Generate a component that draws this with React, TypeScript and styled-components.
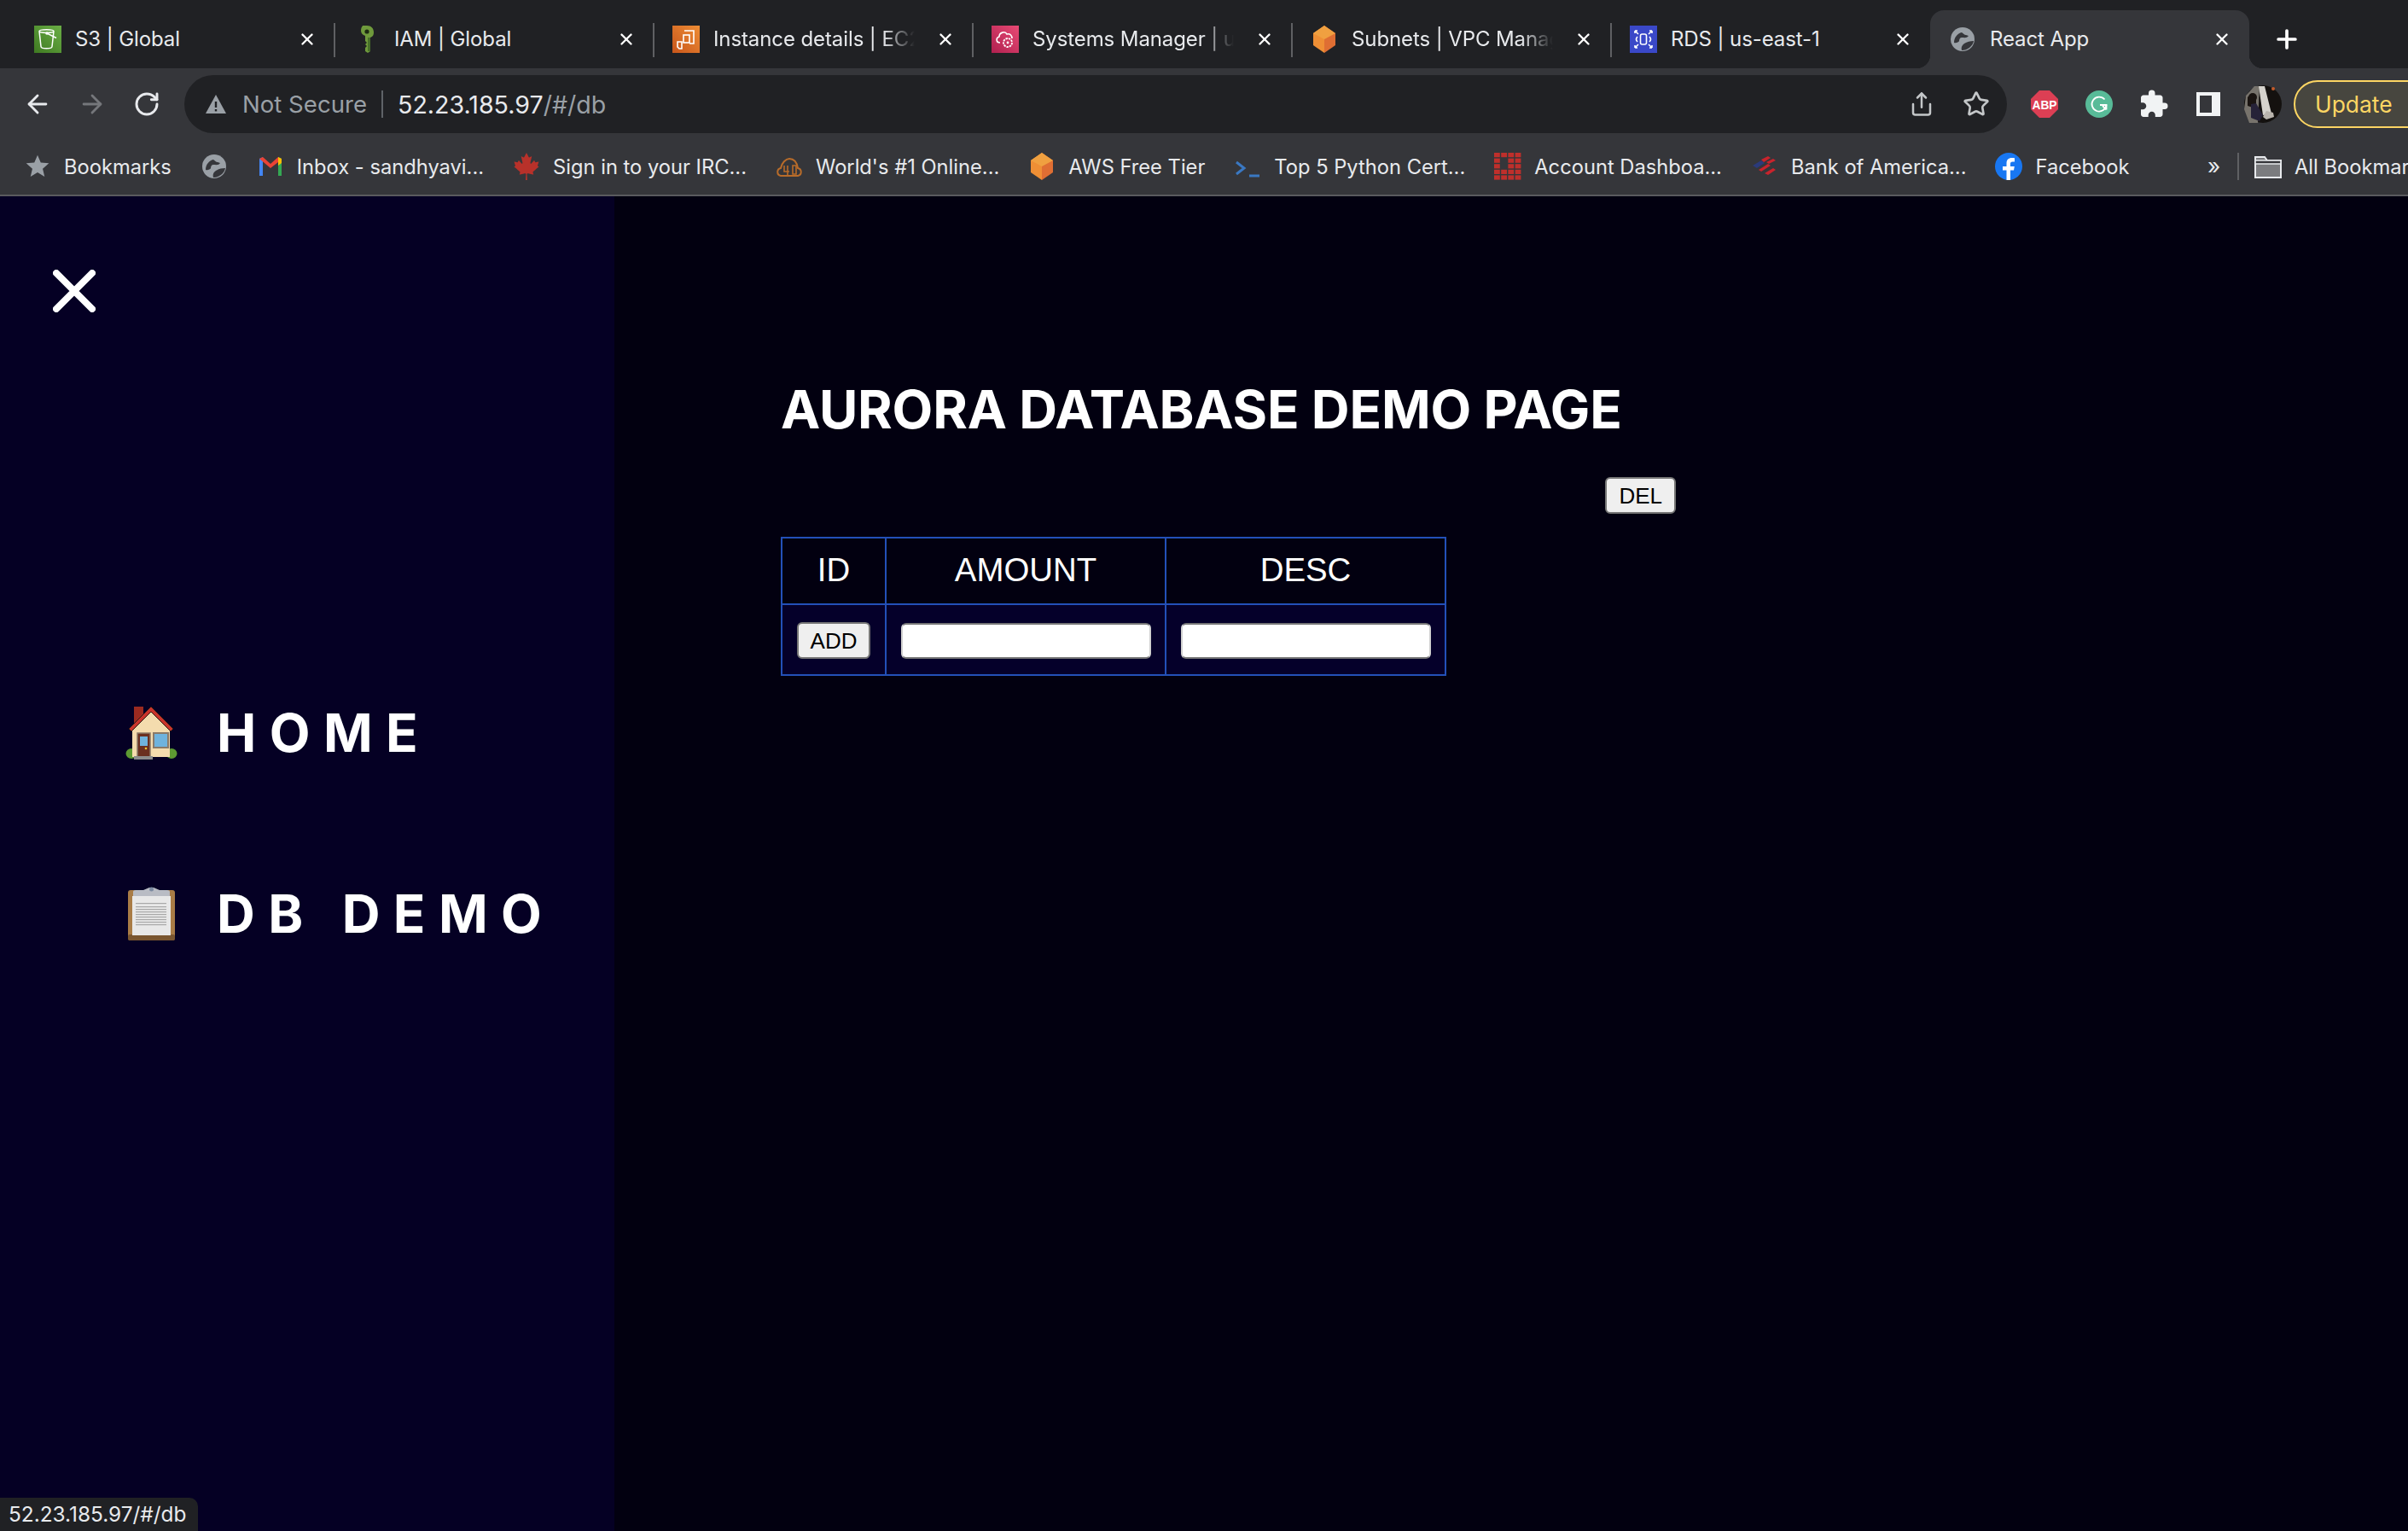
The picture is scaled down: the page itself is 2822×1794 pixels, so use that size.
import React from 'react';
import styled, { createGlobalStyle } from 'styled-components';
import { ArrowLeft, ArrowRight, RotateCw, Share, Star, Plus, X } from 'lucide-react';
import { MdExtension, MdStar } from 'react-icons/md';
import { FaCanadianMapleLeaf } from 'react-icons/fa';

const Global = createGlobalStyle`
  html, body { margin: 0; padding: 0; background: #020010; }
  * { box-sizing: border-box; }
  body { font-family: Inter, "Liberation Sans", sans-serif; }
`;

const Page = styled.div`
  width: 2822px; height: 1794px; display: flex; flex-direction: column; overflow: hidden; position: relative;
`;
const TabStrip = styled.div`
  height: 80px; flex: none; background: #202124; display: flex; align-items: flex-end; padding-left: 18px;
`;
const Tab = styled.div<{ $active?: boolean; $sep?: boolean }>`
  position: relative; width: 374px; height: 68px; display: flex; align-items: center; padding: 0 20px 0 22px;
  background: ${p => (p.$active ? '#35363a' : 'transparent')};
  border-radius: ${p => (p.$active ? '16px 16px 0 0' : '0')};
  &::before {
    content: ${p => (p.$sep ? '""' : 'none')};
    position: absolute; left: -1px; top: 15px; width: 2px; height: 40px; background: #5f6063;
  }
  ${p => p.$active && `
    &::after {
      content: ""; position: absolute; right: -16px; bottom: 0; width: 16px; height: 16px;
      background: radial-gradient(circle at 100% 0, transparent 16px, #35363a 16.5px);
    }
  `}
`;
const ActiveFlareLeft = styled.span`
  position: absolute; left: -16px; bottom: 0; width: 16px; height: 16px;
  background: radial-gradient(circle at 0 0, transparent 16px, #35363a 16.5px);
`;
const Favicon = styled.span`
  width: 32px; height: 32px; flex: none; display: block;
  svg { display: block; width: 32px; height: 32px; }
`;
const TabTitle = styled.span<{ $fade?: boolean }>`
  flex: 1; margin: 0 24px 0 16px; min-width: 0; overflow: hidden; white-space: nowrap;
  font-size: 24px; letter-spacing: -0.1px; line-height: 34px; color: #e8eaed;
  ${p => p.$fade && `mask-image: linear-gradient(to right, #000 84%, transparent 100%);`}
`;
const TabClose = styled.span`
  width: 24px; height: 24px; flex: none; display: flex; align-items: center; justify-content: center; color: #fff;
`;
const NewTab = styled.span`
  width: 36px; height: 68px; margin-left: 26px; display: flex; align-items: center; justify-content: center; color: #fff;
`;
const Toolbar = styled.div`
  height: 76px; flex: none; background: #35363a; padding: 8px 0 0 12px; display: flex; align-items: center; overflow: hidden;
`;
const NavBtn = styled.span<{ $dim?: boolean }>`
  width: 64px; height: 56px; flex: none; display: flex; align-items: center; justify-content: center;
  color: ${p => (p.$dim ? '#75777b' : '#e8eaed')};
`;
const Address = styled.div`
  flex: 1; height: 68px; margin-left: 12px; border-radius: 34px; background: #202124; display: flex; align-items: center;
  padding: 0 4px 0 24px;
`;
const Warn = styled.span`
  width: 26px; height: 24px; flex: none; display: block; svg { display: block; }
`;
const NotSecure = styled.span`
  width: 165px; margin-left: 18px; color: #9aa0a6; white-space: nowrap; border-right: 2px solid #5f6368; line-height: 32px; font-size: 27.6px;
`;
const Url = styled.span`
  margin-left: 17px; color: #e8eaed; white-space: nowrap; flex: 1; font-size: 28.6px;
`;
const UrlRest = styled.span`
  color: #9aa0a6;
`;
const Extensions = styled.div`
  width: 470px; flex: none; padding-left: 12px; display: flex; align-items: center;
`;
const Update = styled.span`
  flex: none; height: 56px; width: 160px; margin-left: 4px; border: 2px solid #fdd663; border-radius: 28px;
  background: #47463f; color: #fdd663; font-size: 26.4px; line-height: 52px; padding-left: 23px;
`;
const Bookmarks = styled.div`
  height: 74px; flex: none; background: #35363a; border-bottom: 2px solid #5a5b5e; display: flex; align-items: center; padding: 6px 0 0 28px; overflow: hidden; gap: 34px;
`;
const Bookmark = styled.span`
  display: flex; align-items: center; gap: 15px; flex: none; font-size: 23.7px; color: #e8eaed; white-space: nowrap;
`;
const BmIcon = styled.span`
  width: 32px; height: 32px; flex: none; display: block; svg { display: block; width: 32px; height: 32px; }
`;
const BmRight = styled.div`
  margin-left: auto; width: 242px; flex: none; display: flex; align-items: center; gap: 18px;
`;
const Chevrons = styled.span`
  width: 24px; padding-left: 7px; color: #e8eaed; font-size: 26px; flex: none; line-height: 32px;
`;
const BmDivider = styled.span`
  width: 2px; height: 32px; background: #5f6063; flex: none;
`;
const Body = styled.div`
  flex: 1; display: flex; min-height: 0;
`;
const Sidebar = styled.aside`
  width: 720px; flex: none; background: #050024; padding: 86px 0 0 62px; display: flex; flex-direction: column; color: #fff;
`;
const CloseBtn = styled.span`
  width: 50px; height: 50px; display: block; svg { display: block; }
`;
const Nav = styled.nav`
  margin: 442px 0 0 85px; display: flex; flex-direction: column; gap: 112px;
`;
const NavItem = styled.div`
  height: 100px; display: flex; align-items: center; gap: 46px;
`;
const Emoji = styled.span`
  width: 61px; height: 64px; flex: none; display: block; svg { display: block; width: 61px; height: 64px; }
`;
const NavText = styled.span`
  font-size: 62px; font-weight: 700; letter-spacing: 15.4px; white-space: nowrap; color: #fff;
`;
const Main = styled.main`
  flex: 1; background: #020010; padding: 210px 0 0 196px; color: #fff;
`;
const Title = styled.h1`
  margin: 0 0 0 -1px; font-size: 62px; line-height: 80px; font-weight: 700; color: #fff; letter-spacing: -0.2px; white-space: nowrap;
`;
const DelRow = styled.div`
  width: 1048px; margin: 39px 0 27px; display: flex; justify-content: flex-end;
`;
const NativeBtn = styled.button`
  height: 43px; padding: 0 14px; border: 2px solid #767676; border-radius: 6px; background: #efefef; color: #000;
  font-family: "Liberation Sans", Arial, sans-serif; font-size: 26px; line-height: 1; display: block;
`;
const Table = styled.table`
  border-collapse: collapse; table-layout: fixed; width: 778px; font-family: "Liberation Sans", Arial, sans-serif; margin-left: -1px;
`;
const Head = styled.th<{ $w: number }>`
  width: ${p => p.$w}px; height: 78px; padding: 0 0 2px; border: 2px solid #2350b8; font-size: 38.4px; font-weight: 400; color: #fff; text-align: center;
`;
const Cell = styled.td`
  height: 83px; padding: 2px 0 0; border: 2px solid #2350b8; background: #05002a; text-align: center; vertical-align: middle;
`;
const CellInner = styled.div`
  display: flex; justify-content: center;
`;
const Field = styled.input`
  width: 293px; height: 42px; border: 2px solid #767676; border-left-color: #d0d0d0; border-right-color: #d0d0d0; border-radius: 6px; background: #fff; padding: 0; display: block;
`;
const Status = styled.div`
  position: absolute; left: 0; bottom: 0; width: 232px; height: 39px; background: #202124; border-top-right-radius: 10px;
  color: #e8eaed; font-size: 24.4px; line-height: 39px; padding-left: 10px; white-space: nowrap;
`;

const S3Icon = () => (
  <svg viewBox="0 0 32 32"><defs><linearGradient id="s3" x1="0" y1="1" x2="1" y2="0"><stop offset="0" stopColor="#3f7a22" /><stop offset="1" stopColor="#6aae45" /></linearGradient></defs>
    <rect width="32" height="32" fill="url(#s3)" /><path d="M6 6.500c0 2.500 17 2.500 17 0s-17-2.500-17 0l2 18c0 3 13 3 13 0l2-18" fill="none" stroke="#fff" strokeWidth="1.500" /><path d="M15 9l11 5.500" stroke="#fff" strokeWidth="1.500" /><circle cx="15" cy="9" r="1.800" fill="#fff" /></svg>
);
const KeyIcon = () => (
  <svg viewBox="0 0 32 32"><path d="M16 0c5 0 8 3 8 8 0 3-1 5-4 6v16l-3 2-3-2v-4l2-2-2-2 2-2-2-2v-6c-3-1-5-3-5-6 0-5 3-8 7-8z" fill="#6f9a3c" /><circle cx="16" cy="7" r="2.600" fill="#1d2b12" /><path d="M17 14h3v16h-3z" fill="#48702a" /></svg>
);
const Ec2Icon = () => (
  <svg viewBox="0 0 32 32"><defs><linearGradient id="ec" x1="0" y1="1" x2="1" y2="0"><stop offset="0" stopColor="#c8561b" /><stop offset="1" stopColor="#ee8d35" /></linearGradient></defs>
    <rect width="32" height="32" fill="url(#ec)" /><path d="M14 6h11v15h-5M6 19h5v8H8l-2-2z" fill="none" stroke="#fff" strokeWidth="1.600" /><rect x="13" y="11" width="7" height="9" fill="none" stroke="#fff" strokeWidth="1.600" /></svg>
);
const SsmIcon = () => (
  <svg viewBox="0 0 32 32"><defs><linearGradient id="ss" x1="0" y1="1" x2="1" y2="0"><stop offset="0" stopColor="#b0204f" /><stop offset="1" stopColor="#e84a75" /></linearGradient></defs>
    <rect width="32" height="32" fill="url(#ss)" /><path d="M10 20c-5 0-5-6-1-7 0-5 7-7 9-3 4-1 6 2 6 5" fill="none" stroke="#fff" strokeWidth="1.600" /><circle cx="19" cy="20" r="5" fill="none" stroke="#fff" strokeWidth="1.800" strokeDasharray="2.400 1" /><circle cx="19" cy="20" r="1.400" fill="#fff" /></svg>
);
const CubeIcon = () => (
  <svg viewBox="0 0 32 32"><path d="M16 0l13 9v14L16 32z" fill="#df6e33" /><path d="M16 0L3 9v14l13 9z" fill="#ef8f35" /><path d="M16 0l13 9-13 7L3 9z" fill="#f0a040" /></svg>
);
const RdsIcon = () => (
  <svg viewBox="0 0 32 32"><rect width="32" height="32" fill="#3a48c8" /><g fill="none" stroke="#fff" strokeWidth="1.600"><rect x="12.500" y="10" width="7" height="12" rx="2" /><path d="M6 6l4 4M6 6v3M6 6h3M26 6l-4 4M26 6v3M26 6h-3M6 26l4-4M6 26v-3M6 26h3M26 26l-4-4M26 26v-3M26 26h-3M9 13c-2 2-2 4 0 6M23 13c2 2 2 4 0 6" /></g></svg>
);
const GlobeIcon = ({ dark = '#35363a' }: { dark?: string }) => (
  <svg viewBox="0 0 32 32"><circle cx="16" cy="16" r="14" fill="#9aa0a6" /><path d="M6 20c0-6 4-11 9-12 2 1 3 3 5 3l3 1c-2 3-5 2-8 2-2 0-3 2-3 4 0 1-4 3-6 2zM15 29c-1-3 0-6 3-8 3-2 7-3 11-3-1 6-7 11-14 11z" fill={dark} /></svg>
);
const GmailIcon = () => (
  <svg viewBox="0 0 32 32"><path d="M3 27V7l4-2v22z" fill="#4285f4" /><path d="M25 27V5l4 2v20z" fill="#34a853" /><path d="M3 7l4-2 9 8 9-8v6l-9 7z" fill="#ea4335" /><path d="M25 5l4 2v5l-4 3z" fill="#fbbc04" /></svg>
);
const CloudIcon = () => (
  <svg viewBox="0 0 32 32"><g fill="none" stroke="#b86c2a" strokeWidth="2"><path d="M6 27c-5-1-5-8 0-9 1-6 6-11 10-11 6 0 9 5 10 11 5 1 5 8 0 9z" /><path d="M10 15v7h6M14 15v11M20 15h4v10h-4z" strokeWidth="1.600" /></g></svg>
);
const PyIcon = () => (
  <svg viewBox="0 0 32 32"><path d="M3 11l9 7-9 7" fill="none" stroke="#3a78c2" strokeWidth="3" /><path d="M18 27h12" stroke="#3a78c2" strokeWidth="3" /></svg>
);
const GridIcon = () => (
  <svg viewBox="0 0 32 32" fill="#bf2f2b">{[0, 1, 2, 3, 4].flatMap(r => [0, 1, 2, 3].map(c => (r === 1 && c === 1) || (r===2&&c===1) ? null : <rect key={`${r}-${c}`} x={c * 8.2} y={r * 6.600} width="6.800" height="5.200" />))}</svg>
);
const BoaIcon = () => (
  <svg viewBox="0 0 32 32"><path d="M2 15l10-6 4 3-9 6z" fill="#2b3a7a" /><path d="M12 8l8-4 3 2-8 5zM9 20l11-7 3 2-11 7zM16 24l10-6 3 2-9 6z" fill="#c8232c" /><path d="M18 11l8-4 3 2-8 4z" fill="#c8232c" /></svg>
);
const FbIcon = () => (
  <svg viewBox="0 0 32 32"><circle cx="16" cy="16" r="16" fill="#1877f2" /><path d="M22 20.500l.8-4.600H18v-3c0-1.300.6-2.500 2.700-2.500H23V6.300c-3-.6-9.500-1.200-9.500 6V16H9v4.500h4.500V32h4.500V20.500z" fill="#fff" /></svg>
);
const FolderIcon = () => (
  <svg viewBox="0 0 32 32"><path d="M1 5h11l3 4h16v20H1z" fill="#7b7c7f" stroke="#e8eaed" strokeWidth="2" /><path d="M1 9h30v4H1z" fill="#35363a" stroke="#e8eaed" strokeWidth="1.600" /></svg>
);
const AbpIcon = () => (
  <svg viewBox="0 0 32 32" width="32" height="32"><path d="M10 0h12l10 10v12L22 32H10L0 22V10z" fill="#dc3f54" /><text x="16" y="21.500" fontFamily="Liberation Sans" fontWeight="700" fontSize="14.500" fill="#fff" textAnchor="middle" textLength="29" lengthAdjust="spacingAndGlyphs">ABP</text></svg>
);
const GrammarlyIcon = () => (
  <svg viewBox="0 0 32 32" width="32" height="32"><circle cx="16" cy="16" r="16" fill="#58bb98" /><path d="M22.500 10.500a8.500 8.500 0 1 0 2 6.500H17" fill="none" stroke="#fff" strokeWidth="1.800" /><path d="M24.500 17v5.500M24.500 22.500L20 18" stroke="#fff" strokeWidth="1.800" fill="none" /></svg>
);
const SidePanelIcon = () => (
  <svg viewBox="0 0 28 28" width="28" height="28"><rect width="28" height="28" fill="#f1f3f4" /><rect x="4" y="4" width="14" height="20" fill="#35363a" /></svg>
);
const AvatarIcon = () => (
  <svg viewBox="0 0 44 44" width="44" height="44"><circle cx="22" cy="22" r="22" fill="#14110f" /><path d="M2 12L12 1h6l-2 43H6L0 28z" fill="#77736c" /><path d="M17 1h7l8 32-10 2z" fill="#d5d2cc" /><circle cx="10" cy="14" r="5" fill="#1a1411" /><path d="M4 14c3-4 8-3 10 0v8l-4 4-6-2z" fill="#1a1411" /><path d="M8 22l6-1 8 14-4 7-10-4z" fill="#262238" /><path d="M26 30l8 2 1 5-9 3-4-3z" fill="#b9b4ad" /><circle cx="34" cy="4" r="2" fill="#c25a2a" /></svg>
);
const HouseEmoji = () => (
  <svg viewBox="0 0 61 64"><ellipse cx="7" cy="57" rx="6.500" ry="6" fill="#5d9a32" /><ellipse cx="54" cy="57" rx="6.500" ry="6" fill="#5d9a32" /><rect x="10" y="2" width="11" height="22" fill="#9b2a20" /><path d="M8 28L30 6l22 22v33H8z" fill="#f4dcae" /><path d="M4 28L30 2l26 26-3 3L30 8 7 31z" fill="#c9342b" stroke="#2b1a14" strokeWidth="1" /><rect x="14" y="33" width="15" height="30" fill="#6b3020" stroke="#8a7a68" strokeWidth="1.500" /><rect x="17" y="37" width="9" height="11" fill="#6fb3dd" /><circle cx="24" cy="51" r="1.300" fill="#f4c430" /><rect x="33" y="33" width="17" height="17" fill="#6fb3dd" stroke="#8a7a68" strokeWidth="2" /><rect x="10" y="60" width="22" height="4" fill="#8d8d8d" /></svg>
);
const ClipboardEmoji = () => (
  <svg viewBox="0 0 61 64"><rect x="3" y="5" width="55" height="59" rx="3" fill="#a97c46" /><rect x="3" y="57" width="55" height="7" rx="2" fill="#7a5630" /><rect x="8" y="12" width="45" height="46" fill="#e8e8e8" /><g fill="#a8a8a8">{[20, 24, 27, 30, 33, 36, 39, 42, 45].map(y => <rect key={y} x="12" y={y} width="36" height="1.200" />)}</g><path d="M9 12V7q0-2 3-2h9l7-3h5l7 3h9q3 0 3 2v5z" fill="#b9bcc4" /><circle cx="30.500" cy="4" r="2.500" fill="#7b8aa0" /></svg>
);
const WarnIcon = () => (
  <svg viewBox="0 0 26 24" width="26" height="24"><path d="M13 1l12 22H1z" fill="#9aa0a6" /><rect x="11.800" y="9" width="2.400" height="7" fill="#202124" /><rect x="11.800" y="18" width="2.400" height="2.400" fill="#202124" /></svg>
);

const tabs = [
  { title: 'S3 | Global', icon: <S3Icon /> },
  { title: 'IAM | Global', icon: <KeyIcon />, sep: true },
  { title: 'Instance details | EC2 Management', icon: <Ec2Icon />, sep: true, fade: true },
  { title: 'Systems Manager | us-east-1', icon: <SsmIcon />, sep: true, fade: true },
  { title: 'Subnets | VPC Management', icon: <CubeIcon />, sep: true, fade: true },
  { title: 'RDS | us-east-1', icon: <RdsIcon />, sep: true },
  { title: 'React App', icon: <GlobeIcon />, active: true },
];

const bookmarks = [
  { label: 'Bookmarks', icon: <MdStar size={32} color="#9aa0a6" /> },
  { label: '', icon: <GlobeIcon /> },
  { label: 'Inbox - sandhyavi...', icon: <GmailIcon /> },
  { label: 'Sign in to your IRC...', icon: <FaCanadianMapleLeaf size={32} color="#b8312a" /> },
  { label: "World's #1 Online...", icon: <CloudIcon /> },
  { label: 'AWS Free Tier', icon: <CubeIcon /> },
  { label: 'Top 5 Python Cert...', icon: <PyIcon /> },
  { label: 'Account Dashboa...', icon: <GridIcon /> },
  { label: 'Bank of America...', icon: <BoaIcon /> },
  { label: 'Facebook', icon: <FbIcon /> },
];

export default function App() {
  return (
    <Page>
      <Global />
      <TabStrip>
        {tabs.map(t => (
          <Tab key={t.title} $active={t.active} $sep={t.sep}>
            {t.active && <ActiveFlareLeft />}
            <Favicon>{t.icon}</Favicon>
            <TabTitle $fade={t.fade}>{t.title}</TabTitle>
            <TabClose><X size={22} strokeWidth={2.6} /></TabClose>
          </Tab>
        ))}
        <NewTab><Plus size={34} strokeWidth={2.6} /></NewTab>
      </TabStrip>
      <Toolbar>
        <NavBtn><ArrowLeft size={34} strokeWidth={2} /></NavBtn>
        <NavBtn $dim><ArrowRight size={34} strokeWidth={2} /></NavBtn>
        <NavBtn><RotateCw size={32} strokeWidth={2.2} /></NavBtn>
        <Address>
          <Warn><WarnIcon /></Warn>
          <NotSecure>Not Secure</NotSecure>
          <Url>52.23.185.97<UrlRest>/#/db</UrlRest></Url>
          <NavBtn><Share size={30} strokeWidth={2} color="#c4c7c9" /></NavBtn>
          <NavBtn><Star size={32} strokeWidth={2} color="#c4c7c9" /></NavBtn>
        </Address>
        <Extensions>
          <NavBtn><AbpIcon /></NavBtn>
          <NavBtn><GrammarlyIcon /></NavBtn>
          <NavBtn><MdExtension size={36} color="#f1f3f4" /></NavBtn>
          <NavBtn><SidePanelIcon /></NavBtn>
          <NavBtn><AvatarIcon /></NavBtn>
          <Update>Update</Update>
        </Extensions>
      </Toolbar>
      <Bookmarks>
        {bookmarks.map((b, i) => (
          <Bookmark key={i}>
            <BmIcon>{b.icon}</BmIcon>
            {b.label}
          </Bookmark>
        ))}
        <BmRight>
          <Chevrons>»</Chevrons>
          <BmDivider />
          <Bookmark><BmIcon><FolderIcon /></BmIcon>All Bookmarks</Bookmark>
        </BmRight>
      </Bookmarks>
      <Body>
        <Sidebar>
          <CloseBtn>
            <svg viewBox="0 0 50 50" width="50" height="50"><path d="M4 4l42 42M46 4L4 46" stroke="#fff" strokeWidth="8" strokeLinecap="round" /></svg>
          </CloseBtn>
          <Nav>
            <NavItem><Emoji><HouseEmoji /></Emoji><NavText>HOME</NavText></NavItem>
            <NavItem><Emoji><ClipboardEmoji /></Emoji><NavText>DB DEMO</NavText></NavItem>
          </Nav>
        </Sidebar>
        <Main>
          <Title>AURORA DATABASE DEMO PAGE</Title>
          <DelRow><NativeBtn>DEL</NativeBtn></DelRow>
          <Table>
            <thead>
              <tr>
                <Head $w={122}>ID</Head>
                <Head $w={328}>AMOUNT</Head>
                <Head $w={328}>DESC</Head>
              </tr>
            </thead>
            <tbody>
              <tr>
                <Cell><CellInner><NativeBtn>ADD</NativeBtn></CellInner></Cell>
                <Cell><CellInner><Field /></CellInner></Cell>
                <Cell><CellInner><Field /></CellInner></Cell>
              </tr>
            </tbody>
          </Table>
        </Main>
      </Body>
      <Status>52.23.185.97/#/db</Status>
    </Page>
  );
}
